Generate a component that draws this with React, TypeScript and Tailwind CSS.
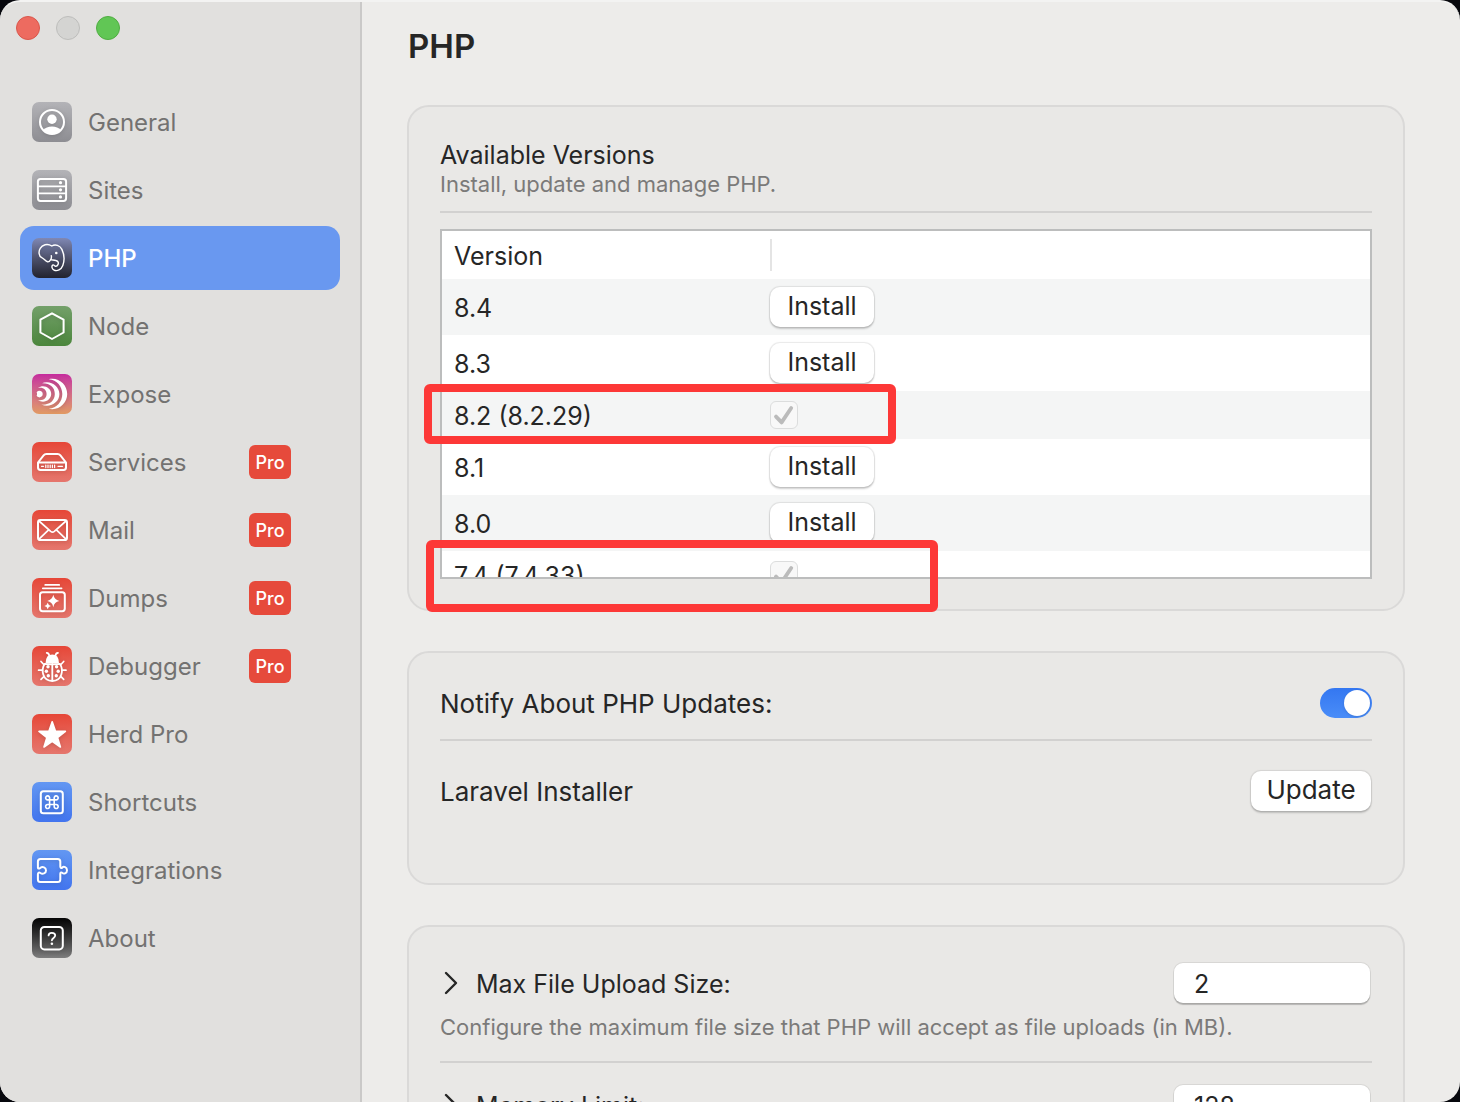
import React from "react";

const GeneralIcon = () => (
  <>
    <circle cx="20" cy="20" r="12" fill="none" strokeWidth="2" />
    <circle cx="20" cy="17.3" r="4.7" fill="white" stroke="none" />
    <path d="M11.3 28C13 25.6 16.2 24.4 20 24.4S27 25.6 28.7 28A12 12 0 0 1 11.3 28Z" fill="white" stroke="none" />
  </>
);

const SitesIcon = () => (
  <>
    <rect x="5.9" y="8.9" width="28.2" height="22" rx="2.6" strokeWidth="2" />
    <path d="M6 16.3H34M6 23.3H34" strokeWidth="1.8" />
    <g fill="white" stroke="none">
      <circle cx="28.5" cy="12.7" r="1.6" />
      <circle cx="28.5" cy="19.8" r="1.6" />
      <circle cx="28.5" cy="26.9" r="1.6" />
    </g>
  </>
);

const PhpIcon = () => (
  <>
    <path
      d="M19.3 17.8C20 20.5 17.8 24.2 15.6 23.8C13.4 23.3 12.4 21 9.8 19.7C6.6 18 6.4 13.4 8.2 10.4C10.2 6.8 15.3 5 19.8 8C23.2 6 28 7.3 29.9 11.4C32.1 16 32.5 22.8 30.8 27.5C29.3 31.6 25 33.5 22.1 32.1C19.8 31 19.4 28.1 20.6 27.1C22 26 22.4 28.4 23.8 28.2C25.7 28 26.9 25.5 26 23.9C24.8 21.9 21.4 22.2 19.3 21.9"
      strokeWidth="1.4"
    />
    <circle cx="24.3" cy="15" r="1.3" fill="white" stroke="none" />
  </>
);

const NodeIcon = () => (
  <path d="M20 7.3L31.6 13.6V26.5L20 33L8.4 26.5V13.6Z" strokeWidth="2" />
);

const ExposeIcon = () => (
  <g fill="white" stroke="none">
    <path d="M4.6 18.4A3.3 3.3 0 1 1 4.6 21.8C5.2 20.8 5.2 19.4 4.6 18.4Z" />
    <path d="M6 14C11.5 10 19.2 13.8 19.2 20S11.5 30 6 26C11.2 27 14.6 24.2 14.6 20S11.2 13 6 14Z" />
    <path d="M9.4 9.4C18 5.6 27.4 11.6 27.4 20S18 34.4 9.4 30.6C17.6 31.2 22.8 26.6 22.8 20S17.6 8.8 9.4 9.4Z" />
    <path d="M16.8 5.2C27 3 35.2 11 35.2 20S27 37 16.8 34.8C25 34 30.3 27.6 30.3 20S25 6 16.8 5.2Z" />
  </g>
);

const ServicesIcon = () => (
  <>
    <path d="M6 20.5L11.6 13.3C12.4 12.3 13.2 12 14.4 12H25.6C26.8 12 27.6 12.3 28.4 13.3L34 20.5V25.6Q34 28 31.6 28H8.4Q6 28 6 25.6ZM7 20.6H33" strokeWidth="2" />
    <path d="M9.5 24.3H11.5M13.8 23V25.6M16 23V25.6M18.2 23V25.6M20.4 23V25.6M22.6 23V25.6M26 24.3H30.5" strokeWidth="1.2" />
  </>
);

const MailIcon = () => (
  <>
    <rect x="6" y="9.9" width="29" height="20.2" rx="2.4" strokeWidth="2" />
    <path d="M7 11L18.7 21.3Q20.5 22.8 22.3 21.3L34 11M7 29.2L16.6 19.8M34 29.2L24.4 19.8" strokeWidth="1.7" />
  </>
);

const DumpsIcon = () => (
  <>
    <path d="M13.2 6.9H27.2M10.8 10.3H29.6" strokeWidth="1.7" />
    <rect x="8" y="14.2" width="24.8" height="19" rx="2.6" strokeWidth="2" />
    <path d="M21.3 16.8Q22.3 21.8 27.3 23Q22.3 24 21.3 29.2Q20.3 24 15.3 23Q20.3 21.8 21.3 16.8ZM15.7 24.8Q16.3 27.4 19 28Q16.3 28.6 15.7 31.2Q15.1 28.6 12.4 28Q15.1 27.4 15.7 24.8Z" fill="white" stroke="none" />
  </>
);

const DebuggerIcon = () => (
  <>
    <path d="M14.7 6.8Q17 7 17.3 10M26 6.8Q23.7 7 23.4 10M9 15.5L11.3 18M31.7 15.5L29.4 18M6.6 24.2H10M30.8 24.2H34M9 33.3L11.8 30.6M31.7 33.3L29 30.6" strokeWidth="1.7" />
    <path d="M13.6 17Q13.8 8.6 20.3 8.6T27 17Q20.3 18.2 13.6 17Z" fill="white" stroke="none" />
    <path d="M12.7 17.8C9 23.8 10 34.8 20.3 35C30.6 34.8 31.6 23.8 27.9 17.8Q20.3 18.8 12.7 17.8ZM20.3 18V34" strokeWidth="1.8" />
    <g fill="white" stroke="none">
      <circle cx="16" cy="20.8" r="1.7" />
      <circle cx="24.6" cy="20.8" r="1.7" />
      <circle cx="14.4" cy="25.3" r="1.7" />
      <circle cx="26.2" cy="25.3" r="1.7" />
      <circle cx="16.3" cy="29.8" r="1.7" />
      <circle cx="24.3" cy="29.8" r="1.7" />
    </g>
  </>
);

const HerdProIcon = () => (
  <path d="M20.2 7.8L23.5 17.2L33.4 17.4L25.5 23.5L28.4 33L20.2 27.3L12 33L14.9 23.5L7 17.4L16.9 17.2Z" fill="white" strokeWidth="1.6" />
);

const ShortcutsIcon = () => (
  <>
    <rect x="8.8" y="9.3" width="22" height="22" rx="2.6" strokeWidth="2" />
    <path d="M17.6 17.9H22.2V22.5H17.6ZM17.6 17.9V16.2A2 2 0 1 0 15.6 17.9ZM22.2 17.9V16.2A2 2 0 1 1 24.2 17.9ZM17.6 22.5V24.2A2 2 0 1 1 15.6 22.5ZM22.2 22.5V24.2A2 2 0 1 0 24.2 22.5Z" strokeWidth="1.6" />
  </>
);

const IntegrationsIcon = () => (
  <path d="M5.9 17.5V11.5Q5.9 8.9 8.5 8.9H25.7Q28.3 8.9 28.3 11.5V16.6C28.3 18.2 29.6 18.3 30.3 17.5C31.6 16.2 35 16.8 35 20.2S31.6 24.2 30.3 22.9C29.6 22.1 28.3 22.2 28.3 23.8V29.5Q28.3 32.1 25.7 32.1H8.5Q5.9 32.1 5.9 29.5V24.2C5.9 22.4 7.2 22.2 8.4 23C10.6 24.6 14 23.4 14 20.4S10.6 16.2 8.4 17.8C7.2 18.6 5.9 19 5.9 17.5Z" strokeWidth="2" />
);

const AboutIcon = () => (
  <>
    <rect x="8.8" y="9" width="22" height="22.4" rx="3.6" strokeWidth="2" />
    <path d="M16.6 17.4C16.6 15.6 18 14.8 19.8 14.8S23.2 15.9 23.2 17.6C23.2 19.9 19.9 19.9 19.9 22.3" strokeWidth="1.8" />
    <circle cx="19.9" cy="25.8" r="1.3" fill="white" stroke="none" />
  </>
);

const gray = "from-[#b3b3b7] to-[#8d8d92]";
const red = "from-[#e64637] to-[#e5766d]";
const blue = "from-[#6397f2] to-[#4274ee]";

const navItems = [
  { label: "General", color: gray, Icon: GeneralIcon },
  { label: "Sites", color: gray, Icon: SitesIcon },
  { label: "PHP", color: "from-[#8088b4] to-[#22232e]", Icon: PhpIcon, active: true },
  { label: "Node", color: "from-[#73a069] to-[#4b863c]", Icon: NodeIcon },
  { label: "Expose", color: "from-[#c52a9d] to-[#e19a62]", Icon: ExposeIcon },
  { label: "Services", color: red, Icon: ServicesIcon, pro: true },
  { label: "Mail", color: red, Icon: MailIcon, pro: true },
  { label: "Dumps", color: red, Icon: DumpsIcon, pro: true },
  { label: "Debugger", color: red, Icon: DebuggerIcon, pro: true },
  { label: "Herd Pro", color: red, Icon: HerdProIcon },
  { label: "Shortcuts", color: blue, Icon: ShortcutsIcon },
  { label: "Integrations", color: blue, Icon: IntegrationsIcon },
  { label: "About", color: "from-[#050505] to-[#7e7e7e]", Icon: AboutIcon },
];

const versions = [
  { name: "8.4", installed: false },
  { name: "8.3", installed: false },
  { name: "8.2 (8.2.29)", installed: true },
  { name: "8.1", installed: false },
  { name: "8.0", installed: false },
  { name: "7.4 (7.4.33)", installed: true },
];

const Sidebar = () => (
  <aside className="w-[362px] shrink-0 border-r-2 border-[#cac9c8] bg-[#e1e0de] px-5 pt-[14px]">
    <div className="-ml-1 flex gap-4">
      <button aria-label="Close" className="size-6 rounded-full border border-[#d9574c] bg-[#ed6b60]" />
      <button aria-label="Minimize" disabled className="size-6 rounded-full border border-[#bdbdbb] bg-[#d4d4d2]" />
      <button aria-label="Zoom" className="size-6 rounded-full border border-[#50ad42] bg-[#61c655]" />
    </div>
    <nav className="mt-[50px] flex flex-col gap-1">
      {navItems.map(({ label, color, Icon, active, pro }) => (
        <a
          key={label}
          href="#"
          className={`flex h-16 items-center gap-4 rounded-[14px] pr-[49px] pl-3 text-[24px] leading-8 ${
            active ? "bg-[#6998f0] font-medium text-white" : "text-[#737271]"
          }`}
        >
          <span className={`size-10 shrink-0 rounded-[7px] bg-linear-to-b ${color}`}>
            <svg
              viewBox="0 0 40 40"
              className="size-10 drop-shadow-sm"
              fill="none"
              stroke="white"
              strokeLinecap="round"
              strokeLinejoin="round"
              aria-hidden="true"
            >
              <Icon />
            </svg>
          </span>
          <span className="flex-1 pt-[2px]">{label}</span>
          {pro && (
            <span className="flex h-[34px] w-[42px] items-center justify-center rounded-md bg-[#e64a3b] pt-[2px] text-[18px] font-medium text-white">
              Pro
            </span>
          )}
        </a>
      ))}
    </nav>
  </aside>
);

const Card = ({ className, children }: { className: string; children: React.ReactNode }) => (
  <section className={`relative rounded-[22px] border-2 border-[#dad9d8] bg-[#e9e8e6] px-[31px] ${className}`}>
    {children}
  </section>
);

const Button = ({ className, children }: { className: string; children: React.ReactNode }) => (
  <button
    className={`h-10 rounded-[10px] bg-white pb-[2px] leading-8 shadow-[0_0_1px_1px_rgba(0,0,0,0.09),0_2px_2px_rgba(0,0,0,0.18)] ${className}`}
  >
    {children}
  </button>
);

const InstalledCheck = ({ name }: { name: string }) => (
  <label className="grid size-7 place-items-center">
    <input
      type="checkbox"
      checked
      disabled
      readOnly
      aria-label={`${name} installed`}
      className="col-start-1 row-start-1 size-7 appearance-none rounded-md border border-[#dcdddd] bg-[#f8f8f8]"
    />
    <svg viewBox="0 0 28 28" className="col-start-1 row-start-1 size-7" fill="none" aria-hidden="true">
      <path d="M6 15.6L11.6 21.4L21.2 7" stroke="#bbbbbb" strokeWidth="3.8" strokeLinecap="round" strokeLinejoin="round" />
    </svg>
  </label>
);

const VersionTable = () => (
  <div className="h-[350px] overflow-hidden border-2 border-[#bcbdbd] bg-white">
    <table className="w-full table-fixed border-collapse">
      <thead>
        <tr className="h-12">
          <th className="w-[328px] p-0 pt-[2px] pl-3 text-left font-normal">Version</th>
          <th className="p-0 text-left">
            <div className="h-8 w-[2px] bg-[#e4e4e4]" />
          </th>
        </tr>
      </thead>
      <tbody>
        {versions.map(({ name, installed }) => (
          <tr key={name} className={`odd:bg-[#f4f5f5] ${installed ? "h-12" : "h-14"}`}>
            <td className="p-0 pt-[2px] pl-3">{name}</td>
            <td className="p-0">
              {installed ? <InstalledCheck name={name} /> : <Button className="block w-[104px]">Install</Button>}
            </td>
          </tr>
        ))}
      </tbody>
    </table>
  </div>
);

const LimitSetting = ({ id, label, value, hint }: { id: string; label: string; value: string; hint: string }) => (
  <div className="border-b-2 border-[#d2d1d0] pb-5">
    <div className="flex items-center">
      <button aria-label={`Expand ${label}`} className="w-9 pl-1">
        <svg viewBox="0 0 14 24" className="h-6 w-[14px]" fill="none" aria-hidden="true">
          <path d="M2 2L12 12L2 22" stroke="#262626" strokeWidth="2.4" strokeLinecap="round" strokeLinejoin="round" />
        </svg>
      </button>
      <label htmlFor={id} className="flex-1 pt-[2px]">
        {label}
      </label>
      <input
        id={id}
        defaultValue={value}
        className="mr-[2px] h-10 w-[196px] rounded-[9px] bg-white px-5 pt-[2px] shadow-[0_0_0_1px_rgba(0,0,0,0.07),0_2px_1px_rgba(0,0,0,0.22)] outline-none"
      />
    </div>
    <p className="mt-[10px] text-[22px] leading-7 text-[#7b7a79]">{hint}</p>
  </div>
);

const App = () => {
  return (
    <div className="h-screen overflow-hidden bg-[#07080d] font-['Inter',sans-serif] text-[25px] leading-8 text-[#262626]">
      <div className="flex h-full overflow-hidden rounded-[20px] border-t-2 border-[#f3f3f2] bg-[#edecea]">
        <Sidebar />
        <main className="min-w-0 flex-1 pt-6 pr-[55px] pl-[45px]">
          <h1 className="pl-px text-[33px] leading-10 font-semibold">PHP</h1>

          <div className="mt-[39px] flex flex-col gap-10">
            <Card className="pt-8 pb-[30px]">
              <h2>Available Versions</h2>
              <p className="text-[22px] leading-[26px] text-[#7b7a79]">Install, update and manage PHP.</p>
              <hr className="mt-[14px] mb-4 border-t-2 border-[#d2d1d0]" />
              <VersionTable />
              {/* highlight frames over the installed versions */}
              <div className="pointer-events-none absolute top-[277px] left-[15px] h-[60px] w-[472px] rounded-md border-8 border-[#fd3837]" />
              <div className="pointer-events-none absolute top-[433px] left-[17px] h-[72px] w-[512px] rounded-md border-8 border-[#fd3837]" />
            </Card>

            <Card className="pt-[30px] pb-[72px] text-[26px]">
              <div className="flex h-10 items-center justify-between">
                <label htmlFor="notify" className="pt-[2px]">
                  Notify About PHP Updates:
                </label>
                <input
                  id="notify"
                  type="checkbox"
                  role="switch"
                  defaultChecked
                  className="flex h-[30px] w-[52px] appearance-none items-center justify-end rounded-full bg-linear-to-b from-[#3477f1] to-[#4a8df8] pr-[2px] before:size-[26px] before:rounded-full before:bg-white before:shadow-sm"
                />
              </div>
              <hr className="mt-4 mb-[30px] border-t-2 border-[#d2d1d0]" />
              <div className="flex items-center justify-between">
                <span className="pt-[2px]">Laravel Installer</span>
                <Button className="mr-px w-[120px]">Update</Button>
              </div>
            </Card>

            <Card className="flex flex-col gap-[22px] pt-9 pb-8">
              <LimitSetting
                id="upload-size"
                label="Max File Upload Size:"
                value="2"
                hint="Configure the maximum file size that PHP will accept as file uploads (in MB)."
              />
              <LimitSetting
                id="memory-limit"
                label="Memory Limit:"
                value="128"
                hint="Configure the maximum memory that a PHP script may use (in MB)."
              />
            </Card>
          </div>
        </main>
      </div>
    </div>
  );
};

export default App;
